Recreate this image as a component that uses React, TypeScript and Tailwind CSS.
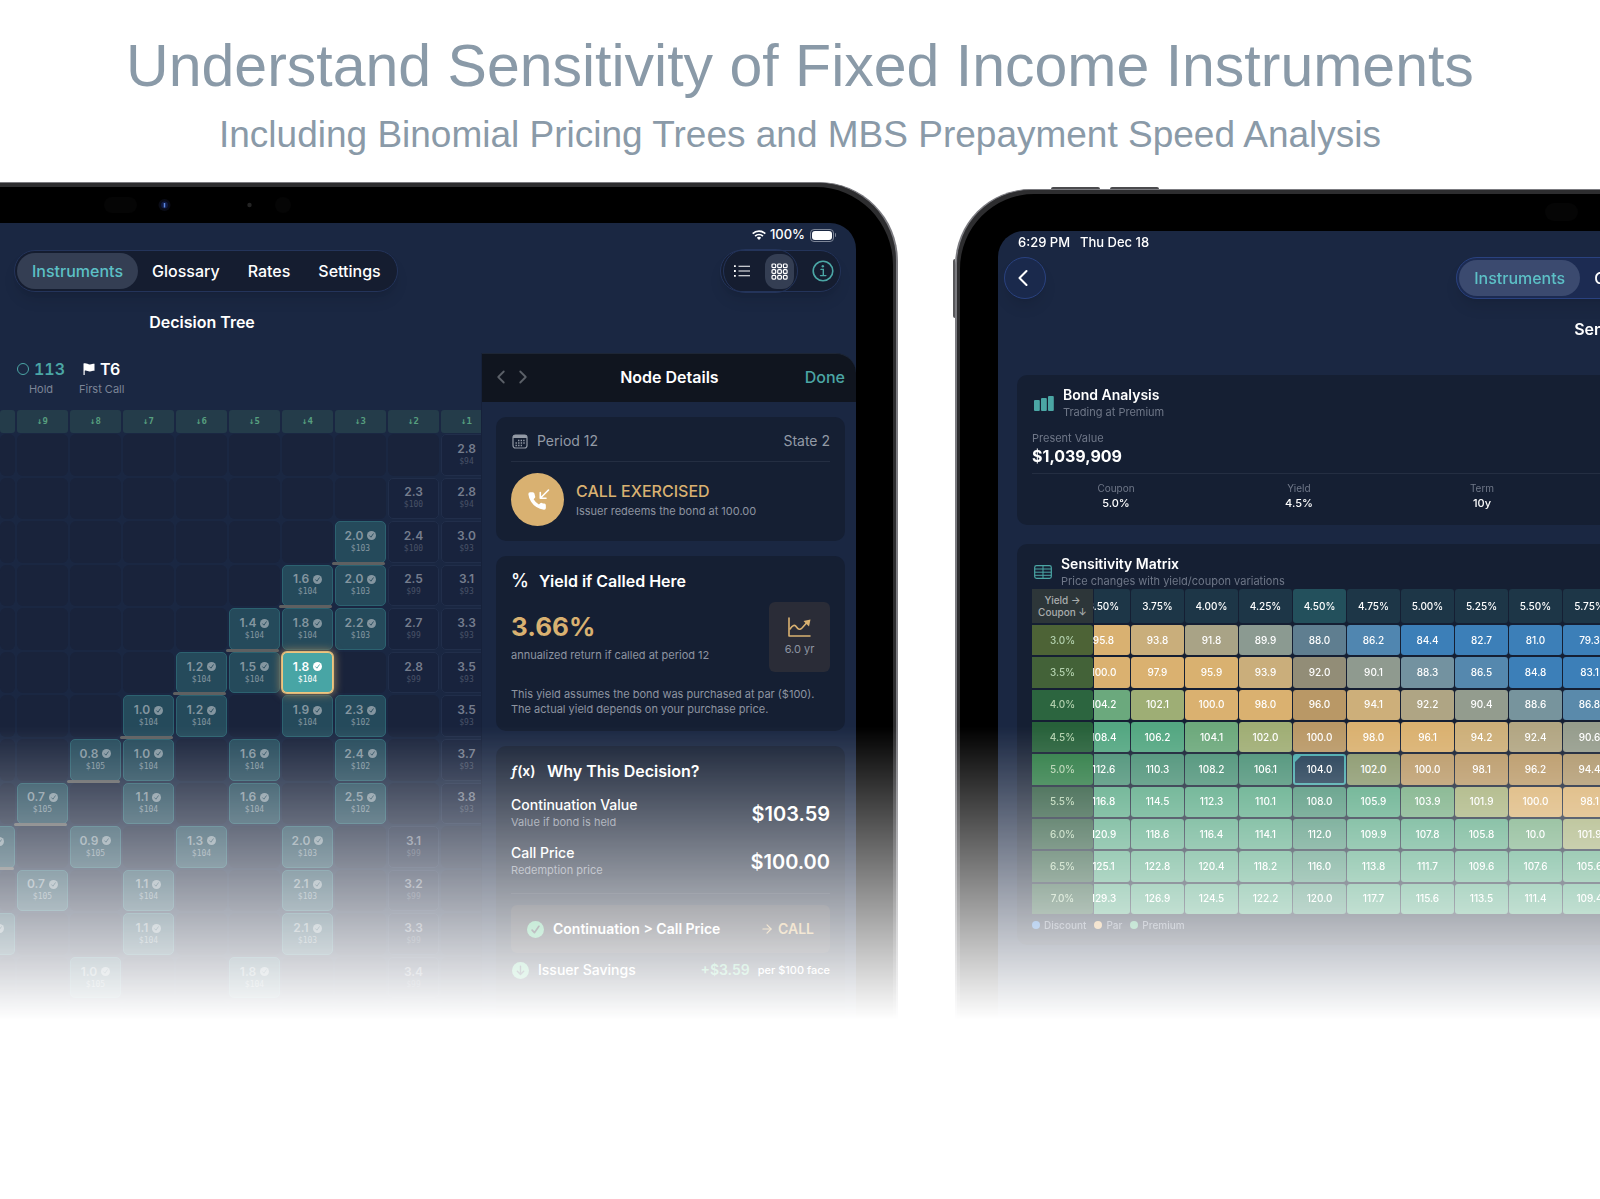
import React from 'react';
import clsx from 'clsx';
import { ChevronLeft, ChevronRight, ArrowRight } from 'lucide-react';

type TreeNode = { col: number; rate?: string; price?: string; edge?: boolean; selected?: boolean };

const periods = [10, 9, 8, 7, 6, 5, 4, 3, 2, 1];

const treeRows: TreeNode[][] = [
  [{ col: 9, rate: '2.8', price: '$94' }],
  [{ col: 8, rate: '2.3', price: '$100' }, { col: 9, rate: '2.8', price: '$94' }],
  [{ col: 7, rate: '2.0', price: '$103', edge: true }, { col: 8, rate: '2.4', price: '$100' }, { col: 9, rate: '3.0', price: '$93' }],
  [{ col: 6, rate: '1.6', price: '$104', edge: true }, { col: 7, rate: '2.0', price: '$103' }, { col: 8, rate: '2.5', price: '$99' }, { col: 9, rate: '3.1', price: '$93' }],
  [{ col: 5, rate: '1.4', price: '$104', edge: true }, { col: 6, rate: '1.8', price: '$104' }, { col: 7, rate: '2.2', price: '$103' }, { col: 8, rate: '2.7', price: '$99' }, { col: 9, rate: '3.3', price: '$93' }],
  [{ col: 4, rate: '1.2', price: '$104', edge: true }, { col: 5, rate: '1.5', price: '$104' }, { col: 6, rate: '1.8', price: '$104', selected: true }, { col: 8, rate: '2.8', price: '$99' }, { col: 9, rate: '3.5', price: '$93' }],
  [{ col: 3, rate: '1.0', price: '$104', edge: true }, { col: 4, rate: '1.2', price: '$104' }, { col: 6, rate: '1.9', price: '$104' }, { col: 7, rate: '2.3', price: '$102' }, { col: 9, rate: '3.5', price: '$93' }],
  [{ col: 2, rate: '0.8', price: '$105', edge: true }, { col: 3, rate: '1.0', price: '$104' }, { col: 5, rate: '1.6', price: '$104' }, { col: 7, rate: '2.4', price: '$102' }, { col: 9, rate: '3.7', price: '$93' }],
  [{ col: 1, rate: '0.7', price: '$105', edge: true }, { col: 3, rate: '1.1', price: '$104' }, { col: 5, rate: '1.6', price: '$104' }, { col: 7, rate: '2.5', price: '$102' }, { col: 9, rate: '3.8', price: '$93' }],
  [{ col: 0, edge: true }, { col: 2, rate: '0.9', price: '$105' }, { col: 4, rate: '1.3', price: '$104' }, { col: 6, rate: '2.0', price: '$103' }, { col: 8, rate: '3.1', price: '$99' }],
  [{ col: 1, rate: '0.7', price: '$105' }, { col: 3, rate: '1.1', price: '$104' }, { col: 6, rate: '2.1', price: '$103' }, { col: 8, rate: '3.2', price: '$99' }],
  [{ col: 0 }, { col: 3, rate: '1.1', price: '$104' }, { col: 6, rate: '2.1', price: '$103' }, { col: 8, rate: '3.3', price: '$99' }],
  [{ col: 2, rate: '1.0', price: '$105' }, { col: 5, rate: '1.8', price: '$104' }, { col: 8, rate: '3.4', price: '$99' }],
  [],
];

const yields = ['3.50%', '3.75%', '4.00%', '4.25%', '4.50%', '4.75%', '5.00%', '5.25%', '5.50%', '5.75%'];
const SELECTED_COL = 4;
const SELECTED_ROW = 4;

const matrix = [
  { coupon: '3.0%', tone: 'bg-[#4d6336]', prices: [95.8, 93.8, 91.8, 89.9, 88.0, 86.2, 84.4, 82.7, 81.0, 79.3] },
  { coupon: '3.5%', tone: 'bg-[#436238]', prices: [100.0, 97.9, 95.9, 93.9, 92.0, 90.1, 88.3, 86.5, 84.8, 83.1] },
  { coupon: '4.0%', tone: 'bg-[#2c653f]', prices: [104.2, 102.1, 100.0, 98.0, 96.0, 94.1, 92.2, 90.4, 88.6, 86.8] },
  { coupon: '4.5%', tone: 'bg-[#27613a]', prices: [108.4, 106.2, 104.1, 102.0, 100.0, 98.0, 96.1, 94.2, 92.4, 90.6] },
  { coupon: '5.0%', tone: 'bg-[#2a7a42]', prices: [112.6, 110.3, 108.2, 106.1, 104.0, 102.0, 100.0, 98.1, 96.2, 94.4] },
  { coupon: '5.5%', tone: 'bg-[#28553a]', prices: [116.8, 114.5, 112.3, 110.1, 108.0, 105.9, 103.9, 101.9, 100.0, 98.1] },
  { coupon: '6.0%', tone: 'bg-[#28553a]', prices: [120.9, 118.6, 116.4, 114.1, 112.0, 109.9, 107.8, 105.8, 10.0, 101.9] },
  { coupon: '6.5%', tone: 'bg-[#28553a]', prices: [125.1, 122.8, 120.4, 118.2, 116.0, 113.8, 111.7, 109.6, 107.6, 105.6] },
  { coupon: '7.0%', tone: 'bg-[#28553a]', prices: [129.3, 126.9, 124.5, 122.2, 120.0, 117.7, 115.6, 113.5, 111.4, 109.4] },
];

// price -> rgb, linearly blended between neighbours
const stops: [number, number[]][] = [
  [85, [60, 127, 184]],
  [88, [110, 145, 163]],
  [90, [141, 154, 144]],
  [92, [172, 164, 133]],
  [94, [204, 175, 122]],
  [96, [218, 177, 112]],
  [100, [218, 177, 112]],
  [102, [160, 174, 117]],
  [104, [110, 169, 124]],
  [106, [84, 167, 130]],
];

const priceColor = (price: number, dimmed: boolean) => {
  const p = price < 50 ? 103.9 : price;
  let rgb = stops[stops.length - 1][1];
  if (p <= stops[0][0]) {
    rgb = stops[0][1];
  } else {
    for (let i = 1; i < stops.length; i++) {
      if (p <= stops[i][0]) {
        const [a, ca] = stops[i - 1];
        const [b, cb] = stops[i];
        const t = (p - a) / (b - a);
        rgb = ca.map((c, k) => c + (cb[k] - c) * t);
        break;
      }
    }
  }
  const base = [21, 31, 51];
  const mixed = dimmed ? rgb.map((c, k) => c * 0.83 + base[k] * 0.17) : rgb;
  return `rgb(${mixed.map(Math.round).join(',')})`;
};

const CheckBadge = ({ className, tick }: { className: string; tick: string }) => (
  <svg viewBox="0 0 16 16" className={className} aria-hidden="true">
    <circle cx="8" cy="8" r="8" fill="currentColor" />
    <path d="M4.8 8.6 7 11l4.2-6" fill="none" stroke={tick} strokeWidth="1.6" strokeLinecap="round" strokeLinejoin="round" />
  </svg>
);

const WifiIcon = () => (
  <svg viewBox="0 0 28 20" className="h-[10px] w-[14px]" aria-hidden="true">
    <g fill="none" stroke="white" strokeWidth="3.4">
      <path d="M1.4 7.4a18 18 0 0 1 25.2 0" />
      <path d="M6.2 12.2a11.2 11.2 0 0 1 15.6 0" />
    </g>
    <path d="M14 20 9.6 15.6a6.4 6.4 0 0 1 8.8 0z" fill="white" />
  </svg>
);

const TabBar = ({ glassy }: { glassy?: boolean }) => (
  <nav
    className={clsx(
      'flex items-center rounded-full border p-[2px] text-base font-medium text-white shadow-lg',
      glassy ? 'border-[#2a4280] bg-[#1c2b52]' : 'border-[#24345a] bg-[#151d30]'
    )}
  >
    <a
      href="#instruments"
      className={clsx('rounded-full px-[15px] py-[6px] leading-6 text-[#5cc0c6]', glassy ? 'bg-[#3b4a6f]' : 'bg-[#343e53]')}
    >
      Instruments
    </a>
    <a href="#glossary" className="px-[14px] leading-6">Glossary</a>
    <a href="#rates" className="px-[14px] leading-6">Rates</a>
    <a href="#settings" className="px-[14px] leading-6">Settings</a>
  </nav>
);

const TreeCell = ({ node }: { node?: TreeNode }) => {
  if (!node) return <div className="rounded-md bg-[#19233b]" />;
  if (!node.rate) {
    return (
      <div className="relative rounded-r-[5px] border border-l-0 border-[#2c6270] bg-[#254a5b] pt-[10px] text-[#8496a0]">
        <CheckBadge className="-ml-[5px] size-[9px]" tick="#254a5b" />
        {node.edge && <div className="absolute -bottom-[3px] left-0 right-0 z-10 h-[3px] rounded-r-full bg-[#5f6061]" />}
      </div>
    );
  }
  const call = node.col < 8;
  return (
    <div
      className={clsx(
        'relative flex flex-col items-center justify-center rounded-[5px] border',
        node.selected && 'z-10 border-[#f0c57f] bg-[#48a5a5] text-white shadow-[0_0_0_1px_#dcb778,0_0_8px_2px_#8a7a5c]',
        call && !node.selected && 'border-[#2c6270] bg-[#254a5b] text-[#8496a0]',
        !call && 'border-[#212e4a] bg-[#18233d] text-[#757d8d]'
      )}
    >
      <div className="flex items-center gap-1 text-xs font-semibold leading-[14px]">
        {node.rate}
        {call && <CheckBadge className="size-[9px]" tick={node.selected ? '#48a5a5' : '#254a5b'} />}
      </div>
      <div className={clsx("font-['DejaVu_Sans_Mono',monospace] text-[8px] leading-3", !call && 'text-[#485267]')}>{node.price}</div>
      {node.edge && <div className="absolute -bottom-[3px] -left-1 right-0 z-10 h-[3px] rounded-full bg-[#5f6061]" />}
    </div>
  );
};

const DecisionTree = () => (
  <div className="min-w-0 flex-1 overflow-hidden border-r border-[#16213a]">
    <div className="flex gap-[14px] pl-[17px] pt-1.5 text-center">
      <div>
        <div className="flex items-center gap-[5px] text-base font-semibold leading-5 text-[#4ba6a5] tabular-nums">
          <span className="size-3 rounded-full border border-[#4ba6a5]" />
          113
        </div>
        <div className="mt-0.5 text-[11px] leading-4 text-[#7c8597]">Hold</div>
      </div>
      <div>
        <div className="flex items-center justify-center gap-[5px] text-base font-semibold leading-5 text-white">
          <svg viewBox="0 0 12 12" className="size-3" aria-hidden="true">
            <path d="M.5.6C3-.5 5 1.6 7 1.4c1.500 0 2.500-.6 4.500-.6v7c-2 0-3 .6-4.500.6C5 8.600 3.500 7 1.700 7.700V12H.5z" fill="white" />
          </svg>
          T6
        </div>
        <div className="mt-0.5 text-[11px] leading-4 text-[#7c8597]">First Call</div>
      </div>
    </div>
    <div className="mt-[13px] grid grid-cols-[15px_repeat(9,51px)] gap-[2px]">
      {periods.map((p) => (
        <div
          key={p}
          className="h-[23px] rounded-[3px] bg-[#243c4a] text-center font-['DejaVu_Sans_Mono',monospace] text-[9px] font-bold leading-[23px] text-[#579f7f]"
        >
          {p < 10 && `↓${p}`}
        </div>
      ))}
    </div>
    <div className="mt-px grid h-[608px] grid-cols-[15px_repeat(9,51px)] grid-rows-[repeat(14,1fr)] gap-[2px]">
      {treeRows.flatMap((row, r) =>
        periods.map((_, c) => <TreeCell key={`${r}-${c}`} node={row.find((n) => n.col === c)} />)
      )}
    </div>
  </div>
);

const NodeDetails = () => (
  <aside className="w-[374px] shrink-0">
    <header className="flex h-[49px] items-center rounded-tr-[20px] border-t border-[#1d2636] bg-[#10151f] pb-0.5 pl-2 pr-[11px]">
      <button type="button" aria-label="Previous node" className="text-[#5b6068]">
        <ChevronLeft className="size-[22px]" />
      </button>
      <button type="button" aria-label="Next node" className="text-[#5b6068]">
        <ChevronRight className="size-[22px]" />
      </button>
      <h3 className="flex-1 text-center text-base font-semibold text-white">Node Details</h3>
      <button type="button" className="text-base font-medium text-[#4ba6a5]">Done</button>
    </header>

    <div className="flex flex-col gap-[15px] pb-10 pl-[14px] pr-[11px] pt-[15px]">
      <section className="rounded-[10px] bg-[#151f33] p-[15px]">
        <div className="flex items-center justify-between border-b border-[#242e42] pb-[11px] text-sm leading-[18px] text-[#939aa6]">
          <span className="flex items-center gap-[9px]">
            <svg viewBox="0 0 16 15" className="ml-px h-[15px] w-4" aria-hidden="true">
              <rect x="1" y="1" width="14" height="13" rx="2.500" fill="none" stroke="currentColor" strokeWidth="1.200" />
              <path d="M1 4V3a2 2 0 0 1 2-2h10a2 2 0 0 1 2 2v1z" fill="currentColor" />
              <path d="M6 6.500h7M3.500 9h9.500M3.500 11.500h6.500" stroke="currentColor" strokeWidth="1.400" strokeDasharray="1.400 1.200" />
            </svg>
            Period 12
          </span>
          <span>State 2</span>
        </div>
        <div className="flex items-center gap-3 pt-[11px]">
          <div className="flex size-[53px] items-center justify-center rounded-full bg-[#d9b171]">
            <svg viewBox="0 0 24 24" className="size-6" aria-hidden="true">
              <path
                d="M22 16.920v3a2 2 0 0 1-2.180 2 19.790 19.790 0 0 1-8.630-3.070 19.500 19.500 0 0 1-6-6A19.790 19.790 0 0 1 2.120 4.180 2 2 0 0 1 4.110 2h3a2 2 0 0 1 2 1.720c.13.960.36 1.900.7 2.810a2 2 0 0 1-.45 2.110L8.090 9.910a16 16 0 0 0 6 6l1.270-1.270a2 2 0 0 1 2.110-.45c.91.34 1.850.57 2.810.7A2 2 0 0 1 22 16.920z"
                fill="white"
                transform="translate(.5 2.500) scale(.88)"
              />
              <path d="M22.500 2 14.500 10M14.300 4.500v5.700H20" fill="none" stroke="white" strokeWidth="1.600" strokeLinecap="round" strokeLinejoin="round" />
            </svg>
          </div>
          <div>
            <div className="text-base font-medium leading-5 text-[#d9b171]">CALL EXERCISED</div>
            <div className="mt-0.5 text-[11px] leading-4 text-[#8d94a1]">Issuer redeems the bond at 100.00</div>
          </div>
        </div>
      </section>

      <section className="rounded-[10px] bg-[#151f33] px-[15px] pb-[14px] pt-[15px]">
        <h4 className="flex items-center gap-2.5 text-base font-semibold leading-5 text-white">
          <span className="w-[18px] text-lg font-medium leading-5">%</span>
          Yield if Called Here
        </h4>
        <div className="mt-[11px] flex items-center justify-between">
          <div>
            <div className="text-[26px] font-bold leading-8 text-[#d9b171]">3.66%</div>
            <div className="mt-1 text-[11px] leading-4 text-[#8d94a1]">annualized return if called at period 12</div>
          </div>
          <div className="flex h-[70px] w-[61px] flex-col items-center justify-center gap-1 rounded-md bg-[#2a2c37]">
            <svg viewBox="0 0 23 20" className="h-5 w-[23px]" aria-hidden="true">
              <g fill="none" stroke="#d9b171" strokeWidth="1.600" strokeLinecap="round" strokeLinejoin="round">
                <path d="M1 1v18h21" />
                <path d="M2 12q4-6 6.500-2t5.500 1l4.500-5" />
              </g>
              <path d="M22.500 2.500l-1.500 7-5.500-5.500z" fill="#d9b171" />
            </svg>
            <span className="text-[11px] leading-4 text-[#8d94a1]">6.0 yr</span>
          </div>
        </div>
        <p className="mt-[15px] text-[11px] leading-[15px] text-[#8d94a1]">
          This yield assumes the bond was purchased at par ($100).
          <br />
          The actual yield depends on your purchase price.
        </p>
      </section>

      <section className="rounded-[10px] bg-[#151f33] p-[15px] pb-[60px] text-white">
        <h4 className="flex items-center gap-2.5 text-base font-semibold leading-5">
          <span className="w-[26px] text-sm leading-5">
            <i>ƒ</i>(x)
          </span>
          Why This Decision?
        </h4>
        <div className="mt-[15px] flex items-center justify-between">
          <div>
            <div className="text-sm font-medium leading-[18px]">Continuation Value</div>
            <div className="text-[11px] leading-[17px] text-[#8d94a1]">Value if bond is held</div>
          </div>
          <div className="text-xl font-semibold">$103.59</div>
        </div>
        <div className="mt-[13px] flex items-center justify-between">
          <div>
            <div className="text-sm font-medium leading-[18px]">Call Price</div>
            <div className="text-[11px] leading-[17px] text-[#8d94a1]">Redemption price</div>
          </div>
          <div className="text-xl font-semibold">$100.00</div>
        </div>
        <hr className="mt-[14px] border-[#242e42]" />
        <div className="mt-[11px] flex h-12 items-center rounded-md bg-[#2a2c37] px-4 text-sm font-semibold">
          <CheckBadge className="mr-[9px] size-[17px] text-[#5cc48d]" tick="#2a2c37" />
          Continuation &gt; Call Price
          <span className="ml-auto flex items-center gap-1 text-[#d9b171]">
            <ArrowRight className="size-3.5" />
            CALL
          </span>
        </div>
        <div className="mt-[7px] flex items-center text-sm font-medium leading-5">
          <svg viewBox="0 0 16 16" className="ml-px mr-[9px] size-[17px]" aria-hidden="true">
            <circle cx="8" cy="8" r="8" fill="#5cc48d" />
            <path d="M8 4v7.500M5 8.700l3 3 3-3" fill="none" stroke="#151f33" strokeWidth="1.300" strokeLinecap="round" strokeLinejoin="round" />
          </svg>
          Issuer Savings
          <span className="ml-auto font-semibold text-[#5cc48d]">+$3.59</span>
          <span className="ml-2 text-[11px]">per $100 face</span>
        </div>
      </section>
    </div>
  </aside>
);

const TreeDevice = () => (
  <section className="relative rounded-tr-[79px] border-r-2 border-t border-[#7b7b80] bg-black pr-10 pt-10 shadow-[inset_-3px_4px_0_#2d2d2f]">
    <svg viewBox="0 0 300 20" className="absolute left-0 top-3 h-5 w-[300px]" aria-hidden="true">
      <rect x="104" y="2" width="33" height="16" rx="8" fill="#050505" />
      <circle cx="164.500" cy="10" r="6" fill="#0a0c16" />
      <circle cx="164.500" cy="10" r="3.500" fill="#101b45" />
      <path d="M164.500 8v4.500" stroke="#5f8be0" strokeWidth="1.500" />
      <circle cx="249.500" cy="10" r="2.200" fill="#242424" />
      <circle cx="283" cy="10" r="8" fill="#050505" />
    </svg>
    <div className="flex flex-col overflow-hidden rounded-tr-[26px] bg-[#1a2742]">
      <div className="flex h-6 items-center justify-end gap-1 pr-5 text-[13px] font-medium text-white">
        <WifiIcon />
        100%
        <span className="ml-px flex items-center gap-px">
          <span className="rounded border border-[#7e8798] p-px">
            <span className="block h-[9px] w-5 rounded-[3px] bg-white" />
          </span>
          <span className="h-1 w-px rounded-r bg-[#7e8798]" />
        </span>
      </div>
      <div className="mt-[3px] flex h-[42px] items-center justify-between pl-[14px] pr-[15px]">
        <TabBar />
        <div className="flex h-[42px] items-center rounded-full border border-[#24345a] bg-[#151d30] pl-[2px] pr-[6px] shadow-lg">
          <div className="flex h-[44px] items-center rounded-full border border-[#24345a] px-[3px]">
            <button type="button" aria-label="List view" className="px-[7px]">
              <svg viewBox="0 0 16 12" className="h-3 w-4" aria-hidden="true">
                <path d="M4.500 1.200H16M4.500 6H16M4.500 10.800H16" stroke="white" strokeWidth="1.100" />
                <path d="M0 1.200h1.800M0 6h1.800M0 10.800h1.800" stroke="white" strokeWidth="1.800" />
              </svg>
            </button>
            <button type="button" aria-label="Grid view" className="ml-[8px] flex h-[35px] w-[29px] items-center justify-center rounded-xl bg-[#343e53]">
              <svg viewBox="0 0 17 17" className="size-[17px]" aria-hidden="true">
                <g fill="none" stroke="white" strokeWidth="1.200">
                  {[1, 6.700, 12.400].map((y) =>
                    [1, 6.700, 12.400].map((x) => <rect key={`${x}-${y}`} x={x} y={y} width="3.700" height="3.700" rx="1" />)
                  )}
                </g>
              </svg>
            </button>
          </div>
          <button type="button" aria-label="Information" className="ml-[14px]">
            <svg viewBox="0 0 22 22" className="size-[22px]" aria-hidden="true">
              <circle cx="11" cy="11" r="9.800" fill="none" stroke="#4ba6a5" strokeWidth="1.600" />
              <circle cx="10.800" cy="6.200" r="1.200" fill="#4ba6a5" />
              <path d="M9 9.400h2.300v6M8.500 15.600h5.400" fill="none" stroke="#4ba6a5" strokeWidth="1.400" strokeLinecap="round" />
            </svg>
          </button>
        </div>
      </div>
      <h2 className="mt-[18px] w-[404px] text-center text-base font-semibold leading-6 text-white">Decision Tree</h2>
      <div className="mt-[19px] flex">
        <DecisionTree />
        <NodeDetails />
      </div>
    </div>
  </section>
);

const SensitivityMatrix = () => (
  <section className="mt-[19px] rounded-[10px] bg-[#151f33] px-[15px] pb-[13px] pt-[11px]">
    <div className="flex items-center gap-[9px]">
      <svg viewBox="0 0 18 14" className="ml-[2px] h-[14px] w-[18px]" aria-hidden="true">
        <rect x=".7" y=".7" width="16.600" height="12.600" rx="1.800" fill="none" stroke="#4ba6a5" strokeWidth="1.200" />
        <path d="M.7 4h16.600M.7 7.200h16.600M.7 10.300h16.600M9 .7v12.600" stroke="#4ba6a5" strokeWidth="1" />
      </svg>
      <div>
        <h3 className="text-sm font-semibold leading-[18px] text-white">Sensitivity Matrix</h3>
        <p className="text-[11px] leading-4 text-[#6f7788]">Price changes with yield/coupon variations</p>
      </div>
    </div>
    <table className="-ml-px -mt-[2px] h-[329px] w-[586px] table-fixed border-separate border-spacing-x-px border-spacing-y-[2px] text-center text-[10px] text-white">
      <thead>
        <tr className="h-[34px]">
          <th scope="col" className="relative z-10 w-[61px] bg-[#2d3639] p-0 font-medium leading-3 text-[#a9adad]">
            Yield →<br />Coupon ↓
          </th>
          {yields.map((y, c) => (
            <th
              key={y}
              scope="col"
              className={clsx('p-0 font-medium', c === 0 ? 'w-9 rounded-r-[3px]' : 'w-[53px] rounded-[3px]', c === SELECTED_COL ? 'bg-[#23505c]' : 'bg-[#1d3647]')}
            >
              <div className={clsx(c === 0 && '-ml-[17px]')}>{y}</div>
            </th>
          ))}
        </tr>
      </thead>
      <tbody>
        {matrix.map((row, r) => (
          <tr key={row.coupon} className="h-[30px]">
            <th scope="row" className={clsx('relative z-10 rounded-r-[3px] p-0 font-medium text-[#b3d1ae]', row.tone)}>
              {row.coupon}
            </th>
            {row.prices.map((price, c) => {
              const current = r === SELECTED_ROW && c === SELECTED_COL;
              const dimmed = r === SELECTED_ROW || c === SELECTED_COL;
              return (
                <td
                  key={c}
                  className={clsx('relative p-0 font-medium', c === 0 ? 'rounded-r-[3px]' : 'rounded-[3px]', current && 'border-2 border-[#46a9ab]')}
                  style={{ backgroundColor: current ? '#1f3a52' : priceColor(price, dimmed) }}
                >
                  {current && (
                    <svg viewBox="0 0 8 8" className="absolute left-0 top-0 size-[6px]" aria-hidden="true">
                      <path d="M0 0h8L0 8z" fill="#46a9ab" />
                    </svg>
                  )}
                  <div className={clsx(c === 0 && '-ml-[17px]')}>{price.toFixed(1)}</div>
                </td>
              );
            })}
          </tr>
        ))}
      </tbody>
    </table>
    <ul className="mt-[2px] flex gap-2 text-[10px] font-medium leading-[14px] text-[#7c8597]">
      <li className="flex items-center gap-1"><span className="size-2 rounded-full bg-[#3c7fd0]" />Discount</li>
      <li className="flex items-center gap-1"><span className="size-2 rounded-full bg-[#e0b070]" />Par</li>
      <li className="flex items-center gap-1"><span className="size-2 rounded-full bg-[#56b283]" />Premium</li>
    </ul>
  </section>
);

const MatrixDevice = () => (
  <section className="relative mt-[7px] rounded-tl-[76px] border-l-2 border-t border-[#7b7b80] bg-black pl-[41px] pt-[41px] shadow-[inset_3px_4px_0_#2d2d2f]">
    <span className="absolute -top-[3px] left-[94px] h-[2px] w-[49px] rounded-t bg-[#4b4b4e]" />
    <span className="absolute -top-[3px] left-[153px] h-[2px] w-[49px] rounded-t bg-[#4b4b4e]" />
    <span className="absolute -left-1 top-[69px] h-[59px] w-[2px] rounded-l bg-[#58585b]" />
    <span className="absolute left-[588px] top-[13px] h-[18px] w-[33px] rounded-full bg-[#050505]" />
    <div className="h-full overflow-hidden rounded-tl-[26px] bg-[#1a2742]">
      <div className="w-[1300px] pb-10">
        <div className="flex h-6 items-center gap-2.5 pl-5 text-[13px] font-medium text-white">
          <span>6:29 PM</span>
          <span>Thu Dec 18</span>
        </div>
        <div className="mt-0.5 flex h-[42px] items-center justify-between px-[6px]">
          <button type="button" aria-label="Back" className="flex size-[42px] items-center justify-center rounded-full border border-[#2a4280] bg-[#1a294c] text-white shadow-lg">
            <ChevronLeft className="-ml-1 size-7" strokeWidth={1.800} />
          </button>
          <TabBar glassy />
          <span className="w-[42px]" />
        </div>
        <h2 className="mt-[18px] pl-1 text-center text-base font-semibold leading-6 text-white">Sensitivity Analysis</h2>
        <div className="mt-[34px] px-[19px]">
          <section className="rounded-[10px] bg-[#151f33] px-[15px] pb-[14px] pt-[11px]">
            <div className="flex items-center gap-[9px]">
              <svg viewBox="0 0 20 15" className="ml-[2px] h-[15px] w-5" aria-hidden="true">
                <g fill="#4ba6a5">
                  <rect x="0" y="4" width="5.800" height="11" rx="1" />
                  <rect x="7" y="2" width="5.800" height="13" rx="1" />
                  <rect x="14" y="0" width="5.800" height="15" rx="1" />
                </g>
              </svg>
              <div>
                <h3 className="text-sm font-semibold leading-[18px] text-white">Bond Analysis</h3>
                <p className="text-[11px] leading-4 text-[#6f7788]">Trading at Premium</p>
              </div>
            </div>
            <div className="mt-2.5 text-[11px] leading-4 text-[#6f7788]">Present Value</div>
            <div className="text-base font-bold leading-5 text-white">$1,039,909</div>
            <dl className="mt-[7px] grid grid-cols-[repeat(6,168px)] gap-[15px] border-t border-[#242e42] pt-[7px] text-center">
              <div>
                <dt className="text-[10px] leading-[15px] text-[#6f7788]">Coupon</dt>
                <dd className="text-[11px] font-medium leading-[15px] text-white">5.0%</dd>
              </div>
              <div>
                <dt className="text-[10px] leading-[15px] text-[#6f7788]">Yield</dt>
                <dd className="text-[11px] font-medium leading-[15px] text-white">4.5%</dd>
              </div>
              <div>
                <dt className="text-[10px] leading-[15px] text-[#6f7788]">Term</dt>
                <dd className="text-[11px] font-medium leading-[15px] text-white">10y</dd>
              </div>
            </dl>
          </section>
          <SensitivityMatrix />
        </div>
      </div>
    </div>
  </section>
);

const App: React.FC = () => {
  return (
    <main className="min-h-screen overflow-hidden bg-white font-['Inter',sans-serif]">
      <header className="px-4 pb-[27px] pt-9 text-center font-['Liberation_Sans',Arial,sans-serif] text-[#8a9aa8]">
        <h1 className="text-[59px] leading-[60px]">Understand Sensitivity of Fixed Income Instruments</h1>
        <p className="mt-[19px] text-[37px] leading-10">Including Binomial Pricing Trees and MBS Prepayment Speed Analysis</p>
      </header>
      <div className="grid max-h-[838px] grid-cols-[minmax(0,898fr)_minmax(0,645fr)] gap-[57px] [mask-image:linear-gradient(to_bottom,black_65%,transparent_100%)]">
        <TreeDevice />
        <MatrixDevice />
      </div>
    </main>
  );
};

export default App;
